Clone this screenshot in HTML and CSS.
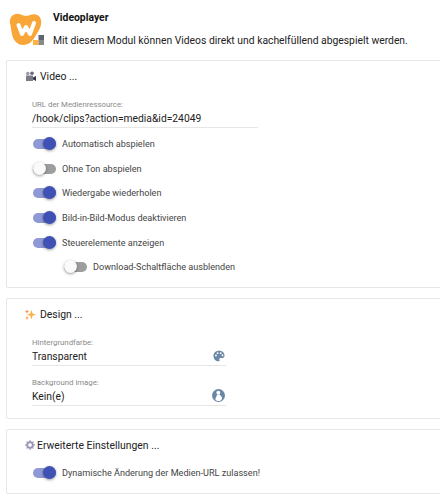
FILE: index.html
```html
<!DOCTYPE html>
<html lang="de">
<head>
  <meta charset="UTF-8">
  <meta name="viewport" content="width=device-width, initial-scale=1.0">
  <title>Videoplayer</title>
  <link rel="stylesheet" href="styles.css">
</head>
<body>
  <header class="module-head">
    <svg class="logo" width="36" height="36" viewBox="0 0 36 36">
      <path d="M1 13C0 7 5 3 10 4C14 5 17 7 21 5C26 3 31 5 32 10C33 16 30 20 27 25C24 31 20 35 14 35C8 35 4 30 3 24C2 20 2 17 1 13Z" fill="#f9a638"/>
      <path d="M9.500 15L13 24L17 17L21 24L25 13" fill="none" stroke="#fff" stroke-width="4" stroke-linejoin="round" stroke-linecap="round"/>
      <rect x="29.500" y="25" width="5.500" height="5" fill="#5f6470"/>
      <rect x="24" y="30" width="5.500" height="5" fill="#fbb43f"/>
      <rect x="29.500" y="30" width="5.500" height="5" fill="#8c8a84"/>
    </svg>
    <div class="module-text">
      <h1>Videoplayer</h1>
      <p>Mit diesem Modul können Videos direkt und kachelfüllend abgespielt werden.</p>
    </div>
  </header>

  <section class="card card-video">
    <h2>
      <svg class="head-icon" width="11" height="11" viewBox="0 0 11 11">
        <circle cx="2.800" cy="2.500" r="1.800" fill="#9a9aa6"/>
        <circle cx="7" cy="2.300" r="1.800" fill="#6a6a78"/>
        <rect x="1" y="4.500" width="7" height="5.500" fill="#7b7b8a"/>
        <path d="M8 6.500L11 5V10L8 8.500Z" fill="#35354a"/>
      </svg>
      Video ...
    </h2>
    <div class="field field-wide">
      <label>URL der Medienressource:</label>
      <div class="value">/hook/clips?action=media&amp;id=24049</div>
    </div>
    <div class="toggles">
      <div class="row"><span class="switch on"></span>Automatisch abspielen</div>
      <div class="row"><span class="switch"></span>Ohne Ton abspielen</div>
      <div class="row"><span class="switch on"></span>Wiedergabe wiederholen</div>
      <div class="row"><span class="switch on"></span>Bild-in-Bild-Modus deaktivieren</div>
      <div class="row"><span class="switch on"></span>Steuerelemente anzeigen</div>
      <div class="row sub"><span class="switch"></span>Download-Schaltfläche ausblenden</div>
    </div>
  </section>

  <section class="card card-design">
    <h2>
      <svg class="head-icon" width="11" height="11" viewBox="0 0 11 11">
        <path d="M6.500 1L7.600 4.400L11 5.500L7.600 6.800L6.500 10.500L5.200 6.800L2 5.500L5.200 4.400Z" fill="#fbb04a"/>
        <path d="M2 .5L2.600 2.100L4 2.700L2.600 3.300L2 4.800L1.400 3.300L0 2.700L1.400 2.100Z" fill="#f58a3c"/>
        <path d="M2 7L2.500 8.400L3.800 9L2.500 9.500L2 11L1.500 9.500L.2 9L1.500 8.400Z" fill="#f58a3c"/>
      </svg>
      Design ...
    </h2>
    <div class="field">
      <label>Hintergrundfarbe:</label>
      <div class="value">Transparent</div>
      <svg class="field-icon" width="12" height="12" viewBox="0 0 13 13">
        <path d="M6.500 .8C3 .8 .5 3.200 .5 6.400C.5 9.600 3 12.200 6 12.200C7.200 12.200 7.500 11.400 7 10.600C6.400 9.600 7 8.600 8.200 8.600H10C11.500 8.600 12.500 7.600 12.500 6C12.500 3 10 .8 6.500 .8Z" fill="#6a88a5"/>
        <circle cx="3.200" cy="6" r="1" fill="#fff"/>
        <circle cx="5" cy="3.400" r="1" fill="#fff"/>
        <circle cx="8.300" cy="3.400" r="1" fill="#fff"/>
        <circle cx="10.300" cy="5.700" r="1" fill="#fff"/>
      </svg>
    </div>
    <div class="field">
      <label>Background image:</label>
      <div class="value">Kein(e)</div>
      <svg class="field-icon" width="13" height="13" viewBox="0 0 13 13">
        <circle cx="6.500" cy="6.500" r="6.500" fill="#6a88a5"/>
        <circle cx="6.300" cy="3.600" r="1.900" fill="#fff"/>
        <path d="M5 5.500H7.800C8.500 7 10.500 8 10 9.500C9.500 11.500 8 12 6.500 12C5 12 3.500 11.500 3.300 10C3.500 8.500 5 7.500 5 5.500Z" fill="#fff"/>
      </svg>
    </div>
  </section>

  <section class="card card-extra">
    <h2>
      <svg class="head-icon gear" width="10" height="10" viewBox="0 0 11 11">
        <path d="M5.500 0V11M0 5.500H11M1.600 1.600L9.400 9.400M9.400 1.600L1.600 9.400" stroke="#b4aec8" stroke-width="1.400"/>
        <circle cx="5.500" cy="5.500" r="3.200" fill="none" stroke="#9a93b4" stroke-width="1.800"/>
        <circle cx="5.500" cy="5.500" r="2" fill="#fff"/>
      </svg>
      Erweiterte Einstellungen ...
    </h2>
    <div class="row"><span class="switch on"></span>Dynamische Änderung der Medien-URL zulassen!</div>
  </section>
</body>
</html>
```

FILE: styles.css
```css
body {
  font-family: Roboto, "Liberation Sans", sans-serif;
  margin: 0;
  padding: 0;
  width: 440px;
  height: 500px;
  overflow: hidden;
  background-color: #fff;
  color: #212121;
}

.module-head {
  display: flex;
  height: 60px;
  box-sizing: border-box;
  padding: 10px 0 0 9px;
}

.logo {
  flex: none;
  margin-right: 8px;
}

.module-text {
  padding-top: 1px;
}

.module-text h1 {
  margin: 0;
  font-size: 10.4px;
  line-height: 14px;
  font-weight: 700;
  color: #111;
}

.module-text p {
  margin: 9px 0 0;
  font-size: 10.35px;
  line-height: 14px;
  white-space: nowrap;
  color: #222;
}

.card {
  margin: 0 -4px 10px 6px;
  border: 1px solid #e6e6e6;
  border-radius: 2px;
  box-sizing: border-box;
}

.card-video {
  height: 228px;
}

.card-design {
  height: 121px;
}

.card-extra {
  height: 65px;
}

.card h2 {
  display: flex;
  align-items: center;
  margin: 0;
  padding: 5px 0 0 18px;
  height: 20px;
  font-size: 10.4px;
  font-weight: 400;
  color: #222;
}

.head-icon {
  margin-right: 4px;
}

.gear {
  margin-right: 2px;
}

.field {
  position: relative;
  width: 194px;
  margin: 10px 0 0 25px;
  padding-top: 1px;
  border-bottom: 1px solid #e6e6e6;
}

.field-wide {
  width: 226px;
  margin-top: 12px;
}

.card-design .field:first-of-type {
  margin-top: 12px;
}

.field label {
  display: block;
  font-size: 7.8px;
  line-height: 12px;
  color: #8a8a8a;
}

.field .value {
  font-size: 10.3px;
  line-height: 16px;
  color: #212121;
}

.field-icon {
  position: absolute;
  right: 1px;
  bottom: 3px;
}

.toggles {
  margin-top: 4px;
}

.row {
  display: flex;
  align-items: center;
  height: 24.6px;
  padding-left: 26px;
  font-size: 9.1px;
  color: #444;
}

.row.sub {
  padding-left: 57px;
}

.card-extra .row {
  margin-top: 6px;
}

.switch {
  position: relative;
  flex: none;
  width: 23px;
  height: 10px;
  margin-right: 6px;
  border-radius: 5px;
  background-color: #9e9e9e;
}

.switch::after {
  content: "";
  position: absolute;
  top: -2px;
  left: 0;
  width: 13px;
  height: 13px;
  border-radius: 50%;
  background-color: #fafafa;
  box-shadow: 0 1px 3px rgba(0, 0, 0, 0.4);
}

.switch.on {
  background-color: #8e99d6;
}

.switch.on::after {
  left: 10px;
  background-color: #3f51b5;
}
```
